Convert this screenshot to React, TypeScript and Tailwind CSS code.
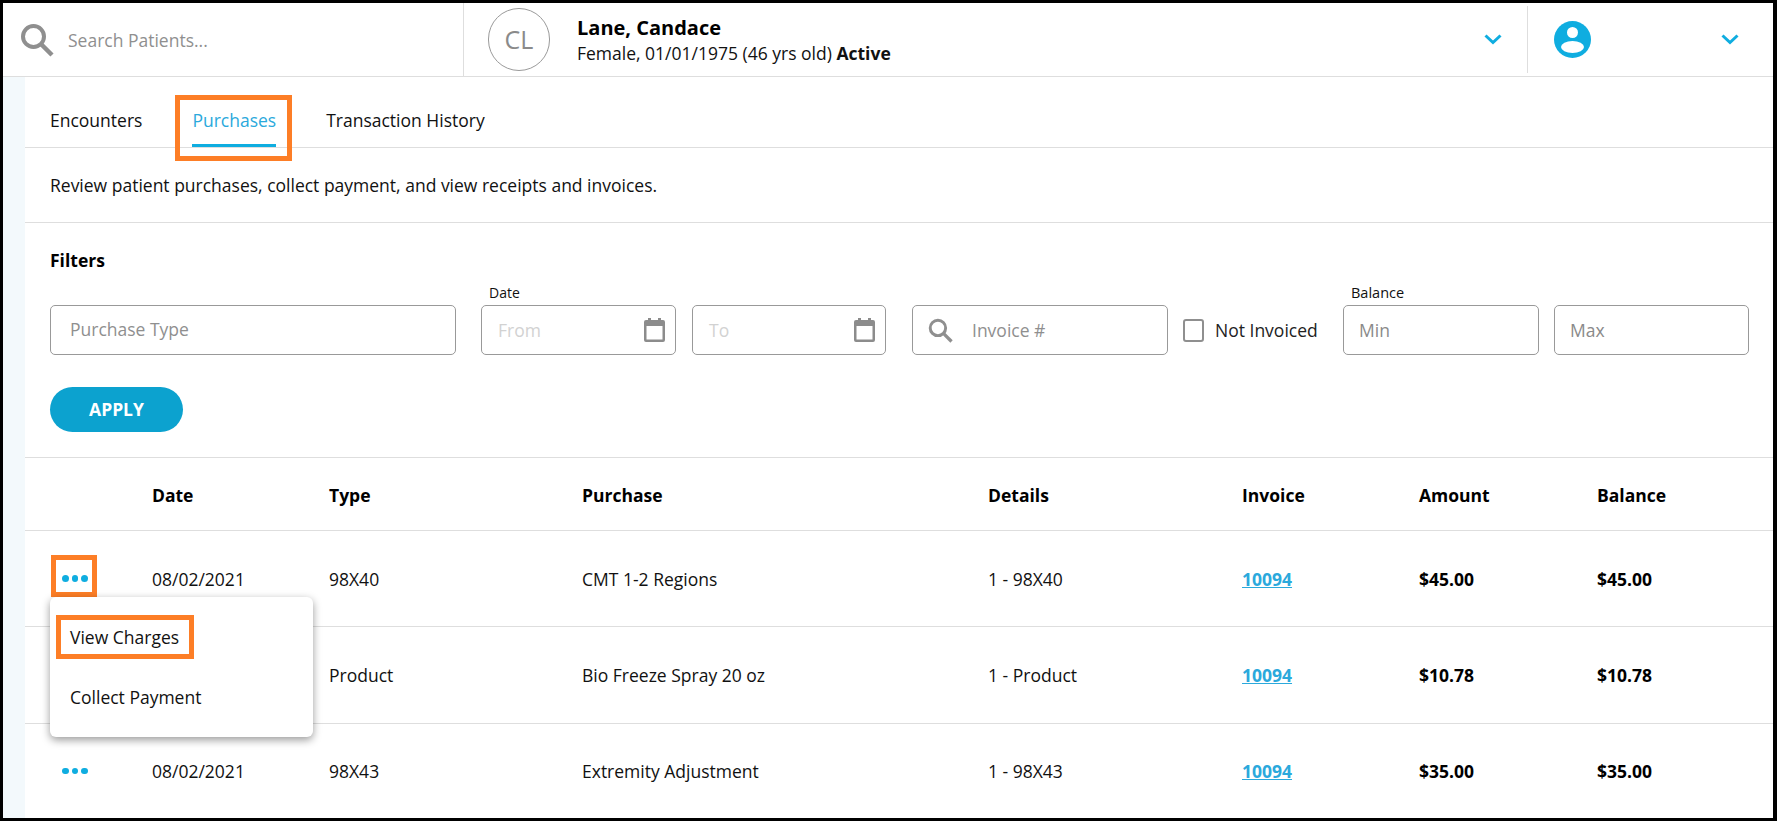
import React from "react";

const SearchIcon = ({ className }: { className: string }) => (
  <svg viewBox="0 0 34 34" className={className} fill="none" stroke="currentColor">
    <circle cx="13.5" cy="13.5" r="10.5" strokeWidth="4" />
    <path d="M21 21 L32 32" strokeWidth="4.5" />
  </svg>
);

const Chevron = () => (
  <svg viewBox="0 0 18 11" className="w-[18px] h-[11px] text-[#0fade0]" fill="none" stroke="currentColor" strokeWidth="3">
    <path d="M1.5 1.5 L9 8.5 L16.5 1.5" />
  </svg>
);

const CalendarIcon = () => (
  <svg viewBox="0 0 21 24" className="w-[21px] h-[24px] text-[#8c8c8c]" fill="currentColor">
    <rect x="4" y="0" width="3" height="4" />
    <rect x="14" y="0" width="3" height="4" />
    <path fillRule="evenodd" d="M2 2 H19 A2 2 0 0 1 21 4 V22 A2 2 0 0 1 19 24 H2 A2 2 0 0 1 0 22 V4 A2 2 0 0 1 2 2 Z M2.5 8 V21.5 H18.5 V8 Z" />
  </svg>
);

const DateInput = ({ label, width }: { label: string; width: string }) => (
  <div className={`${width} h-[50px] border border-[#999] rounded-[5px] flex items-center justify-between pl-[16px] pr-[10px]`}>
    <span className="text-[#d2d2d2]">{label}</span>
    <CalendarIcon />
  </div>
);

const Dots = () => (
  <div className="flex gap-[3px] ml-[37px] mt-[-1px]">
    <span className="w-[6.5px] h-[6.5px] rounded-full bg-[#0fade0]" />
    <span className="w-[6.5px] h-[6.5px] rounded-full bg-[#0fade0]" />
    <span className="w-[6.5px] h-[6.5px] rounded-full bg-[#0fade0]" />
  </div>
);

const rows = [
  { date: "08/02/2021", type: "98X40", purchase: "CMT 1-2 Regions", details: "1 - 98X40", amount: "$45.00", height: "h-[96px]" },
  { date: "08/02/2021", type: "Product", purchase: "Bio Freeze Spray 20 oz", details: "1 - Product", amount: "$10.78", height: "h-[97px]" },
  { date: "08/02/2021", type: "98X43", purchase: "Extremity Adjustment", details: "1 - 98X43", amount: "$35.00", height: "h-[94px]" },
];

const gridCols = "grid grid-cols-[127px_177px_253px_406px_254px_177px_178px_1fr] items-center";

export default function App() {
  return (
    <div className="w-[1777px] h-[821px] overflow-hidden bg-white border-black border-t-[3px] border-l-[3px] border-r-[4px] border-b-[3px] flex flex-col font-['Open_Sans',sans-serif] text-[17.5px] text-[#111]">
      {/* Top bar */}
      <header className="h-[74px] shrink-0 border-b border-[#dedede] flex items-center">
        <div className="w-[461px] h-full flex items-center pl-[17px] border-r border-[#dedede] text-[#8f8f8f]">
          <SearchIcon className="w-[34px] h-[34px] shrink-0" />
          <span className="ml-[14px] mt-[1px]">Search Patients...</span>
        </div>
        <div className="flex-1 h-full flex items-center pl-[24px]">
          <div className="w-[62px] h-[63px] rounded-full border border-[#9a9a9a] flex items-center justify-center text-[25px] text-[#8a8a8a]">
            CL
          </div>
          <div className="ml-[27px] flex flex-col">
            <span className="text-[20px] font-bold leading-[26px] text-black">Lane, Candace</span>
            <span className="leading-[24px] text-[#111]">
              Female, 01/01/1975 (46 yrs old) <b className="font-bold">Active</b>
            </span>
          </div>
          <div className="ml-auto mr-[25px]">
            <Chevron />
          </div>
        </div>
        <div className="w-[246px] h-[67px] border-l border-[#dedede] flex items-center pl-[26px] pr-[34px] justify-between">
          <svg viewBox="0 0 37 37" className="w-[37px] h-[37px]">
            <circle cx="18.5" cy="18.5" r="18.5" fill="#0fade0" />
            <circle cx="18.5" cy="11.5" r="5.5" fill="#fff" />
            <ellipse cx="18.5" cy="26" rx="11.5" ry="6" fill="#fff" />
          </svg>
          <Chevron />
        </div>
      </header>

      <div className="flex-1 flex min-h-0">
        <div className="w-[22px] shrink-0 bg-[#f3f9fc]" />
        <main className="flex-1 min-w-0">
          {/* Tabs */}
          <nav className="h-[71px] border-b border-[#dedede] flex items-stretch pl-[25px]">
            <div className="flex items-center pt-[20px] pb-[3px] text-[#111]">Encounters</div>
            <div className="relative ml-[50px] flex items-center pt-[20px] border-b-[3px] border-[#0fade0] text-[#2ba9dc]">
              Purchases
              <div className="absolute left-[-17px] right-[-16px] top-[18px] bottom-[-17px] border-[5px] border-[#fd7e26]" />
            </div>
            <div className="ml-[50px] flex items-center pt-[20px] pb-[3px] text-[#111]">Transaction History</div>
          </nav>

          {/* Description */}
          <div className="h-[75px] border-b border-[#dedede] flex items-center pl-[25px] text-[#111]">
            Review patient purchases, collect payment, and view receipts and invoices.
          </div>

          {/* Filters */}
          <section className="h-[235px] border-b border-[#dedede] pl-[25px] pt-[25px]">
            <div className="font-bold leading-[24px] text-black">Filters</div>
            <div className="mt-[11px] flex items-end">
              <div className="w-[406px] h-[50px] border border-[#999] rounded-[5px] flex items-center pl-[19px] pb-[2px] text-[#8f8f8f]">
                Purchase Type
              </div>
              <div className="ml-[25px]">
                <div className="h-[19px] mb-[3px] pl-[8px] text-[14px] leading-[19px] text-[#111]">Date</div>
                <div className="flex gap-[16px]">
                  <DateInput label="From" width="w-[195px]" />
                  <DateInput label="To" width="w-[194px]" />
                </div>
              </div>
              <div className="ml-[26px] w-[256px] h-[50px] border border-[#999] rounded-[5px] flex items-center pl-[15px] text-[#8f8f8f]">
                <SearchIcon className="w-[25px] h-[25px] shrink-0" />
                <span className="ml-[19px]">Invoice #</span>
              </div>
              <div className="ml-[15px] w-[160px] h-[50px] flex items-center">
                <span className="w-[21px] h-[23px] border-2 border-[#8f8f8f] rounded-[3px] shrink-0" />
                <span className="ml-[11px] text-[#222]">Not Invoiced</span>
              </div>
              <div>
                <div className="h-[19px] mb-[3px] pl-[8px] text-[14.5px] leading-[19px] text-[#111]">Balance</div>
                <div className="flex gap-[15px]">
                  <div className="w-[196px] h-[50px] border border-[#999] rounded-[5px] flex items-center pl-[15px] text-[#8a8a8a]">Min</div>
                  <div className="w-[195px] h-[50px] border border-[#999] rounded-[5px] flex items-center pl-[15px] text-[#8a8a8a]">Max</div>
                </div>
              </div>
            </div>
            <button className="mt-[32px] w-[133px] h-[45px] rounded-full bg-[#0ca2cf] text-white font-bold text-[17.5px]">
              APPLY
            </button>
          </section>

          {/* Purchases table */}
          <div className={`${gridCols} h-[73px] pt-[2px] border-b border-[#dedede] font-bold text-black`}>
            <span />
            <span>Date</span>
            <span>Type</span>
            <span>Purchase</span>
            <span>Details</span>
            <span>Invoice</span>
            <span>Amount</span>
            <span>Balance</span>
          </div>
          <div className="relative">
            {rows.map((row, i) => (
              <div key={i} className={`${gridCols} ${row.height} pt-[1px] ${i < 2 ? "border-b border-[#dedede]" : ""} text-[#111]`}>
                {i === 1 ? <span /> : <Dots />}
                <span>{row.date}</span>
                <span>{row.type}</span>
                <span>{row.purchase}</span>
                <span>{row.details}</span>
                <a className="font-bold text-[#2ba9dc] underline">10094</a>
                <span className="font-bold text-black">{row.amount}</span>
                <span className="font-bold text-black">{row.amount}</span>
              </div>
            ))}

            {/* Highlight round the first row's actions */}
            <div className="absolute left-[26px] top-[24px] w-[46px] h-[42px] border-[5px] border-[#fd7e26]" />

            {/* Row actions menu */}
            <div className="absolute left-[25px] top-[66px] w-[263px] h-[140px] bg-white rounded-[6px] shadow-[0_3px_8px_rgba(0,0,0,0.4)] text-[#111]">
              <div className="absolute left-[6px] top-[18px] w-[138px] h-[44px] border-[5px] border-[#fd7e26] flex items-center pl-[9px]">
                View Charges
              </div>
              <div className="absolute left-[20px] top-[88px] leading-[24px]">Collect Payment</div>
            </div>
          </div>
        </main>
      </div>
    </div>
  );
}
